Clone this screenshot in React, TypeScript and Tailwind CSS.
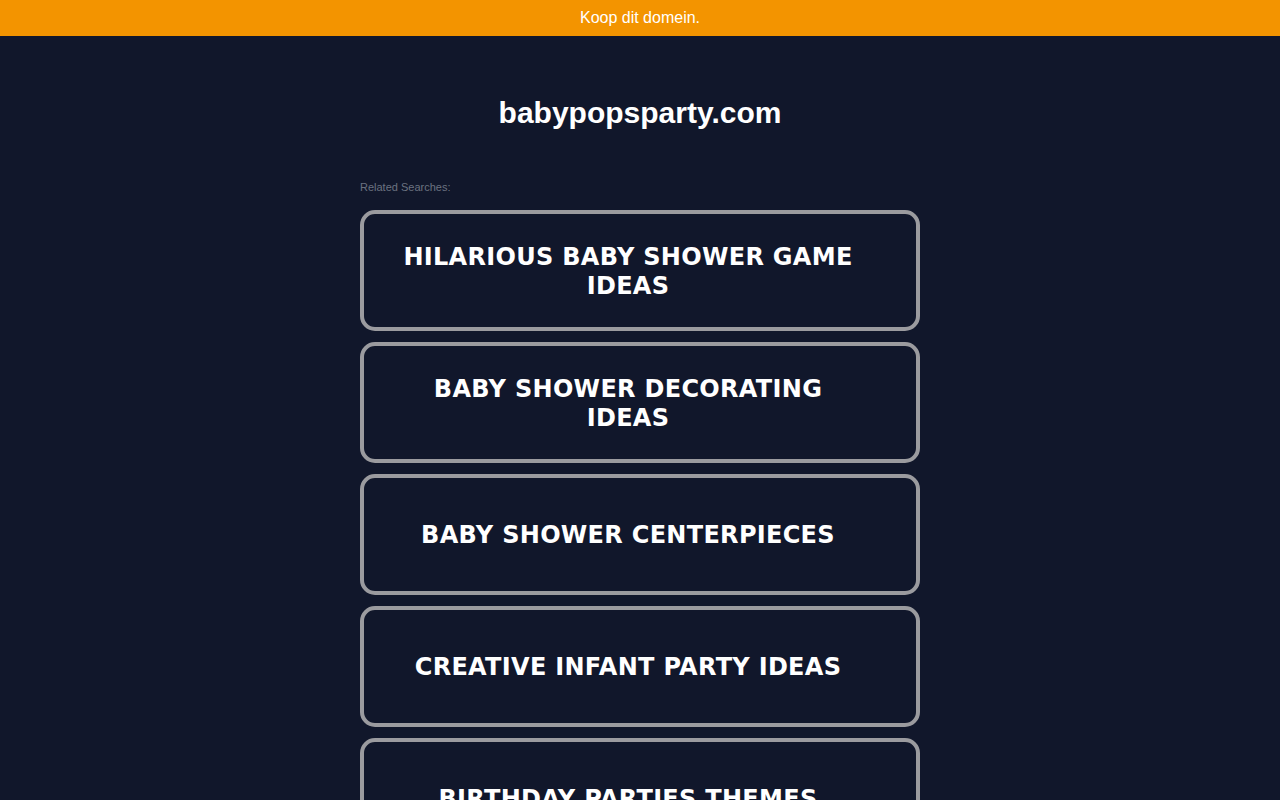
import React from "react";

const items = [
  "HILARIOUS BABY SHOWER GAME IDEAS",
  "BABY SHOWER DECORATING IDEAS",
  "BABY SHOWER CENTERPIECES",
  "CREATIVE INFANT PARTY IDEAS",
  "BIRTHDAY PARTIES THEMES",
];

export default function App() {
  return (
    <div className="min-h-screen bg-[#11172b] font-['Liberation_Sans',Arial,sans-serif]">
      <div className="h-[36px] bg-[#f39400] flex items-center justify-center text-white text-[16px]">
        Koop dit domein.
      </div>
      <div className="flex flex-col items-center">
        <h1 className="mt-[59px] text-white font-bold text-[30px] leading-[36px]">
          babypopsparty.com
        </h1>
        <div className="w-[560px] mt-[49px]">
          <div className="text-[11px] leading-[14px] text-[#6b7280]">Related Searches:</div>
          <div className="mt-[16px] flex flex-col gap-[11px]">
            {items.map((t) => (
              <div
                key={t}
                className="h-[121px] rounded-[15px] border-[4px] border-[#9b9b9f] flex items-center"
              >
                <div className="ml-[34px] mt-[2px] w-[460px] text-center text-white font-bold text-[24px] leading-[29px] tracking-[0.3px] font-['DejaVu_Sans',Verdana,sans-serif]">
                  {t}
                </div>
              </div>
            ))}
          </div>
        </div>
      </div>
    </div>
  );
}
